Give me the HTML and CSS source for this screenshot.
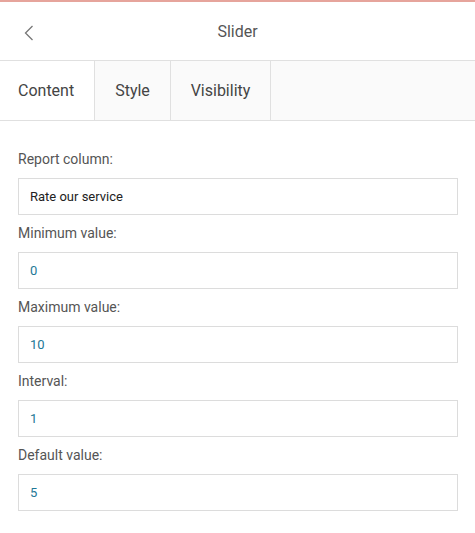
FILE: index.html
```html
<!DOCTYPE html>
<html>
<head>
<meta charset="utf-8">
<link rel="stylesheet" href="styles.css">
</head>
<body>
<div class="topline"></div>
<header class="header">
  <button class="back" aria-label="Back">
    <svg width="12" height="16" viewBox="0 0 12 16"><path d="M9.5 1 L2.5 8 L9.5 15" fill="none" stroke="#777" stroke-width="1.3"/></svg>
  </button>
  <div class="title">Slider</div>
</header>
<nav class="tabs">
  <div class="tab active">Content</div>
  <div class="tab">Style</div>
  <div class="tab">Visibility</div>
  <div class="tab-fill"></div>
</nav>
<main class="form">
  <div class="field">
    <label class="label">Report column:</label>
    <div class="input text">Rate our service</div>
  </div>
  <div class="field">
    <label class="label">Minimum value:</label>
    <div class="input num">0</div>
  </div>
  <div class="field">
    <label class="label">Maximum value:</label>
    <div class="input num">10</div>
  </div>
  <div class="field">
    <label class="label">Interval:</label>
    <div class="input num">1</div>
  </div>
  <div class="field">
    <label class="label">Default value:</label>
    <div class="input num">5</div>
  </div>
</main>
</body>
</html>
```
FILE: styles.css
```css
* { box-sizing: border-box; }
html, body { margin: 0; padding: 0; background: #fff; }
body { font-family: Roboto, "Liberation Sans", Arial, sans-serif; color: #555; width: 475px; }
.topline { height: 2px; background: #e6a49c; }
.header { height: 59px; display: flex; align-items: center; justify-content: center; position: relative; border-bottom: 1px solid #e0e0e0; }
.back { position: absolute; left: 19px; top: 20px; width: 20px; height: 22px; border: 0; background: none; padding: 0; display: flex; align-items: center; justify-content: center; }
.title { font-size: 16px; color: #555; }
.tabs { display: flex; height: 60px; border-bottom: 1px solid #e0e0e0; background: #fafafa; }
.tab { display: flex; align-items: center; padding: 0 18px; font-size: 16px; color: #444; border-right: 1px solid #e0e0e0; background: #fafafa; }
.tab.active { background: #fff; width: 95px; }
.tab:nth-child(2) { width: 76px; justify-content: center; padding: 0; }
.tab:nth-child(3) { width: 100px; justify-content: center; padding: 0; }
.tab-fill { flex: 1; }
.form { padding: 29px 17px 0 18px; display: flex; flex-direction: column; gap: 9px; }
.field { display: flex; flex-direction: column; gap: 10px; }
.label { font-size: 14px; color: #555; line-height: 18px; }
.input { height: 37px; border: 1px solid #dcdcdc; display: flex; align-items: center; padding: 0 11px; font-size: 13px; }
.input.text { color: #222; }
.input.num { color: #1e7896; }
```
